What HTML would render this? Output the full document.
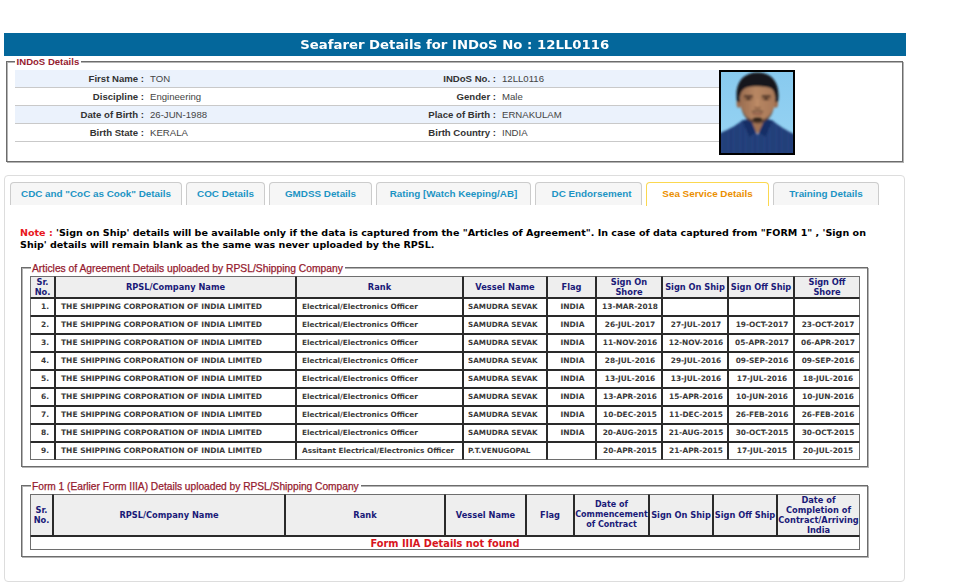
<!DOCTYPE html>
<html lang="en">
<head>
<meta charset="utf-8">
<title>Seafarer Details</title>
<style>
html,body{margin:0;padding:0;background:#fff;}
body{width:974px;height:586px;position:relative;overflow:hidden;font-family:"Liberation Sans",Arial,sans-serif;color:#333;}
.vb{font-family:"DejaVu Sans",Verdana,sans-serif;font-weight:bold;}
#title{position:absolute;left:4px;top:33px;width:902px;height:23px;background:#04679b;color:#fff;text-align:center;font-size:12.5px;line-height:24px;white-space:nowrap;}
#title span{display:inline-block;transform:scaleX(1.06);}
fieldset{position:absolute;margin:0;padding:0;border:1px solid #6c6c6c;box-shadow:1px 1px 0 #b4b4b4,inset 1px 1px 0 #b4b4b4;box-sizing:border-box;min-width:0;}
legend{padding:0 2px 0 1px;margin-left:8px;color:#961b2f;font-size:10.3px;line-height:12px;white-space:nowrap;background:#fff;position:relative;top:2px;}
#fs1{left:6px;top:55px;width:897px;height:107px;}
#fs1 legend{font-weight:bold;font-size:9.55px;top:1px;padding:0 2px 0 1.6px;}
#fs3 legend{font-size:10.2px;}
#fs2 legend,#fs3 legend{margin-left:9px;-webkit-text-stroke:0.25px #961b2f;}
.row{position:absolute;left:7px;width:704px;height:17px;border-bottom:1px solid #c9c9c9;font-size:9.6px;line-height:17px;white-space:nowrap;}
.row.alt{background:#ebf2fc;}
.row b{position:absolute;top:0;text-align:right;color:#333;}
.row span{position:absolute;top:0;color:#444;}
.l1{left:0;width:129px;} .v1{left:135px;}
.l2{left:300px;width:181px;} .v2{left:487px;}
#photo{position:absolute;left:719px;top:70px;width:76px;height:85px;background:#000;}
#photo svg{position:absolute;left:2px;top:2px;}

#tabs{position:absolute;left:4px;top:175px;width:899px;height:405px;border:1px solid #dddddd;border-radius:4px;background:#fff;}
.tab{position:absolute;top:182px;height:23px;box-sizing:border-box;border:1px solid #cccccc;border-bottom:0;border-radius:4px 4px 0 0;background:#f6f6f6;color:#1c94c4;font-weight:bold;font-size:9.85px;line-height:21px;text-align:center;white-space:nowrap;}
.tab.on{background:#fff;border-color:#fbd850;color:#eb8f00;height:24px;}
#note{position:absolute;left:20px;top:227px;font-size:9.55px;line-height:11.6px;white-space:nowrap;color:#000;}
#note i{font-style:normal;color:#e8161c;}
#fs2{left:21px;top:261px;width:847px;height:206px;}
#fs3{left:21px;top:479px;width:847px;height:78px;}
table{position:absolute;border-collapse:separate;border-spacing:0;table-layout:fixed;width:830px;left:30px;}
td,th{box-sizing:border-box;border:1px solid #2a2a2a;padding:0;overflow:hidden;white-space:nowrap;font-family:"DejaVu Sans",Verdana,sans-serif;font-weight:bold;}
th{background:#eeeeee;color:#1a1a78;font-size:8.25px;line-height:10px;text-align:center;white-space:normal;}
td{font-size:7.5px;color:#3a3a3a;height:18px;line-height:14px;text-align:center;}
tr:first-child>th{border-top-color:#6e6e6e;}tr:last-child>td{border-bottom-color:#6e6e6e;}tr>:first-child{border-left-color:#6e6e6e;}tr>:last-child{border-right-color:#6e6e6e;}
#t1{top:276px;}
#t1 th{height:22px;}
#t1 td.c1{text-align:right;padding-right:5px;}
#t1 td.c2,#t1 td.c3{text-align:left;padding-left:5px;}#t1 td.c4{text-align:left;padding-left:4px;}
#t1 td.c5,#t1 td.c6,#t1 td.c7,#t1 td.c8,#t1 td.c9{padding-left:2px;}#t1 td.c3{font-size:7.3px;}#t1 td.c4{font-size:7.2px;}#t1 td.c6,#t1 td.c7,#t1 td.c8,#t1 td.c9{font-size:7.4px;}
#t2{top:494px;}
#t2 th{height:42px;}#t2 th:nth-child(6){font-size:8px;}
#t2 td{height:14px;line-height:11px;font-size:9.8px;color:#d8141c;}
</style>
</head>
<body>
<div id="title" class="vb"><span>Seafarer Details for INDoS No : 12LL0116</span></div>

<fieldset id="fs1">
<legend>INDoS Details</legend>
</fieldset>
<div id="rows" style="position:absolute;left:8px;top:70px;">
 <div class="row alt" style="top:0"><b class="l1">First Name :</b><span class="v1">TON</span><b class="l2">INDoS No. :</b><span class="v2">12LL0116</span></div>
 <div class="row" style="top:18px"><b class="l1">Discipline :</b><span class="v1">Engineering</span><b class="l2">Gender :</b><span class="v2">Male</span></div>
 <div class="row alt" style="top:36px"><b class="l1">Date of Birth :</b><span class="v1">26-JUN-1988</span><b class="l2">Place of Birth :</b><span class="v2">ERNAKULAM</span></div>
 <div class="row" style="top:54px"><b class="l1">Birth State :</b><span class="v1">KERALA</span><b class="l2">Birth Country :</b><span class="v2">INDIA</span></div>
</div>
<div id="photo">
<svg width="72" height="81" viewBox="0 0 72 81">
 <defs>
  <filter id="bl" x="-10%" y="-10%" width="120%" height="120%"><feGaussianBlur stdDeviation="0.9"/></filter>
  <linearGradient id="bg" x1="0" y1="0" x2="0" y2="1"><stop offset="0" stop-color="#88caef"/><stop offset="1" stop-color="#98d4f3"/></linearGradient>
  <linearGradient id="fc" x1="0" y1="0" x2="1" y2="0"><stop offset="0" stop-color="#9a6d50"/><stop offset="0.45" stop-color="#b88763"/><stop offset="1" stop-color="#a87858"/></linearGradient>
  <pattern id="st" width="2.4" height="4" patternUnits="userSpaceOnUse"><rect width="2.4" height="4" fill="#1d3872"/><rect x="0" width="0.7" height="4" fill="#31528f"/></pattern>
  <clipPath id="cp"><rect width="72" height="81"/></clipPath>
 </defs>
 <rect width="72" height="81" fill="url(#bg)"/>
 <g clip-path="url(#cp)" filter="url(#bl)">
  <!-- shirt -->
  <path d="M-3 62 C6 58 15 54 21 48.5 L30 52 L36.5 63 L43 52 L51.5 48.5 C58 54 66 59 75 63 L75 84 L-3 84 Z" fill="url(#st)"/>
  <!-- neck -->
  <path d="M28 42 L45 42 L45 51 L36.5 62 L29 51 Z" fill="#a27253"/>
  <!-- collar -->
  <path d="M21 48.5 L29.5 46.5 L35 60 L28.5 65 Z" fill="#182f66"/>
  <path d="M51.5 48.5 L44 46.5 L38 60 L44.5 65 Z" fill="#182f66"/>
  <!-- ears -->
  <ellipse cx="17.8" cy="31.5" rx="2.2" ry="4.2" fill="#9c6a4b"/>
  <ellipse cx="54.8" cy="31.5" rx="2.2" ry="4.2" fill="#9c6a4b"/>
  <!-- face -->
  <path d="M19 22 C19 10 54 10 54 22 L54 32 C52.5 42 44.5 50 36.5 50 C28.5 50 20.5 42 19 32 Z" fill="url(#fc)"/>
  <!-- jaw shadow / stubble -->
  <path d="M20.5 36 C24 45.5 30.5 48.5 36.5 48.5 C42.5 48.5 49 45.5 52.5 36 C51 46.5 43.5 51.5 36.5 51.5 C29.5 51.5 22 46.5 20.5 36 Z" fill="#5b4132" opacity="0.85"/>
  <ellipse cx="36.5" cy="47.6" rx="5" ry="2.7" fill="#35271f"/>
  <!-- hair -->
  <path d="M16 30 C13 10 23 0.5 36.5 0.5 C50 0.5 60 10 57 30 L54.2 30 C54.6 22 53 17.5 49 15.8 C43 14 31 13.6 25.5 15.6 C20.5 17.4 18.4 22 18.8 30 Z" fill="#14141d"/>
  <!-- eye sockets, brows & eyes -->
  <ellipse cx="27.3" cy="26" rx="5" ry="2.8" fill="#8a5f45" opacity="0.7"/>
  <ellipse cx="45.2" cy="26" rx="5" ry="2.8" fill="#8a5f45" opacity="0.7"/>
  <rect x="22.8" y="23.3" width="9.2" height="1.5" rx="0.75" fill="#2f201a"/>
  <rect x="40.6" y="23.3" width="9.2" height="1.5" rx="0.75" fill="#2f201a"/>
  <ellipse cx="27.4" cy="26.9" rx="2.3" ry="1.1" fill="#33221c"/>
  <ellipse cx="45.1" cy="26.9" rx="2.3" ry="1.1" fill="#33221c"/>
  <!-- nose & mouth -->
  <path d="M36.5 27 L36.5 34" stroke="#c7966f" stroke-width="1.6" fill="none" opacity="0.7"/>
  <path d="M33.6 35.4 Q36.5 37.4 39.4 35.4" stroke="#7d523a" stroke-width="1.3" fill="none"/>
  <path d="M31.8 41.6 Q36.5 43 41.2 41.6" stroke="#7a413a" stroke-width="1.5" fill="none"/>
  <!-- moustache -->
  <path d="M30.8 39.8 Q36.5 37.9 42.2 39.8" stroke="#4a3328" stroke-width="1.1" fill="none" opacity="0.9"/>
 </g>
</svg>
</div>

<div id="tabs"></div>
<div class="tab" style="left:10px;width:172px">CDC and "CoC as Cook" Details</div>
<div class="tab" style="left:186px;width:79px">COC Details</div>
<div class="tab" style="left:269px;width:103px">GMDSS Details</div>
<div class="tab" style="left:376px;width:155px">Rating [Watch Keeping/AB]</div>
<div class="tab" style="left:535px;width:107px;padding-left:6px">DC Endorsement</div>
<div class="tab on" style="left:646px;width:123px">Sea Service Details</div>
<div class="tab" style="left:773px;width:106px">Training Details</div>
<div id="note" class="vb"><i>Note :</i> 'Sign on Ship' details will be available only if the data is captured from the "Articles of Agreement". In case of data captured from "FORM 1" , 'Sign on<br>Ship' details will remain blank as the same was never uploaded by the RPSL.</div>

<fieldset id="fs2"><legend>Articles of Agreement Details uploaded by RPSL/Shipping Company</legend></fieldset>
<table id="t1">
 <colgroup><col style="width:25px"><col style="width:241px"><col style="width:167px"><col style="width:84px"><col style="width:49px"><col style="width:66px"><col style="width:66px"><col style="width:66px"><col style="width:66px"></colgroup>
 <tr><th>Sr.<br>No.</th><th>RPSL/Company Name</th><th>Rank</th><th>Vessel Name</th><th>Flag</th><th>Sign On<br>Shore</th><th>Sign On Ship</th><th>Sign Off Ship</th><th>Sign Off<br>Shore</th></tr>
 <tr><td class="c1">1.</td><td class="c2">THE SHIPPING CORPORATION OF INDIA LIMITED</td><td class="c3">Electrical/Electronics Officer</td><td class="c4">SAMUDRA SEVAK</td><td class="c5">INDIA</td><td class="c6">13-MAR-2018</td><td class="c7">&nbsp;</td><td class="c8">&nbsp;</td><td class="c9">&nbsp;</td></tr>
 <tr><td class="c1">2.</td><td class="c2">THE SHIPPING CORPORATION OF INDIA LIMITED</td><td class="c3">Electrical/Electronics Officer</td><td class="c4">SAMUDRA SEVAK</td><td class="c5">INDIA</td><td class="c6">26-JUL-2017</td><td class="c7">27-JUL-2017</td><td class="c8">19-OCT-2017</td><td class="c9">23-OCT-2017</td></tr>
 <tr><td class="c1">3.</td><td class="c2">THE SHIPPING CORPORATION OF INDIA LIMITED</td><td class="c3">Electrical/Electronics Officer</td><td class="c4">SAMUDRA SEVAK</td><td class="c5">INDIA</td><td class="c6">11-NOV-2016</td><td class="c7">12-NOV-2016</td><td class="c8">05-APR-2017</td><td class="c9">06-APR-2017</td></tr>
 <tr><td class="c1">4.</td><td class="c2">THE SHIPPING CORPORATION OF INDIA LIMITED</td><td class="c3">Electrical/Electronics Officer</td><td class="c4">SAMUDRA SEVAK</td><td class="c5">INDIA</td><td class="c6">28-JUL-2016</td><td class="c7">29-JUL-2016</td><td class="c8">09-SEP-2016</td><td class="c9">09-SEP-2016</td></tr>
 <tr><td class="c1">5.</td><td class="c2">THE SHIPPING CORPORATION OF INDIA LIMITED</td><td class="c3">Electrical/Electronics Officer</td><td class="c4">SAMUDRA SEVAK</td><td class="c5">INDIA</td><td class="c6">13-JUL-2016</td><td class="c7">13-JUL-2016</td><td class="c8">17-JUL-2016</td><td class="c9">18-JUL-2016</td></tr>
 <tr><td class="c1">6.</td><td class="c2">THE SHIPPING CORPORATION OF INDIA LIMITED</td><td class="c3">Electrical/Electronics Officer</td><td class="c4">SAMUDRA SEVAK</td><td class="c5">INDIA</td><td class="c6">13-APR-2016</td><td class="c7">15-APR-2016</td><td class="c8">10-JUN-2016</td><td class="c9">10-JUN-2016</td></tr>
 <tr><td class="c1">7.</td><td class="c2">THE SHIPPING CORPORATION OF INDIA LIMITED</td><td class="c3">Electrical/Electronics Officer</td><td class="c4">SAMUDRA SEVAK</td><td class="c5">INDIA</td><td class="c6">10-DEC-2015</td><td class="c7">11-DEC-2015</td><td class="c8">26-FEB-2016</td><td class="c9">26-FEB-2016</td></tr>
 <tr><td class="c1">8.</td><td class="c2">THE SHIPPING CORPORATION OF INDIA LIMITED</td><td class="c3">Electrical/Electronics Officer</td><td class="c4">SAMUDRA SEVAK</td><td class="c5">INDIA</td><td class="c6">20-AUG-2015</td><td class="c7">21-AUG-2015</td><td class="c8">30-OCT-2015</td><td class="c9">30-OCT-2015</td></tr>
 <tr><td class="c1">9.</td><td class="c2">THE SHIPPING CORPORATION OF INDIA LIMITED</td><td class="c3">Assitant Electrical/Electronics Officer</td><td class="c4">P.T.VENUGOPAL</td><td class="c5">&nbsp;</td><td class="c6">20-APR-2015</td><td class="c7">21-APR-2015</td><td class="c8">17-JUL-2015</td><td class="c9">20-JUL-2015</td></tr>
</table>

<fieldset id="fs3"><legend>Form 1 (Earlier Form IIIA) Details uploaded by RPSL/Shipping Company</legend></fieldset>
<table id="t2">
 <colgroup><col style="width:23px"><col style="width:232px"><col style="width:160px"><col style="width:81px"><col style="width:48px"><col style="width:75px"><col style="width:64px"><col style="width:64px"><col style="width:83px"></colgroup>
 <tr><th>Sr.<br>No.</th><th>RPSL/Company Name</th><th>Rank</th><th>Vessel Name</th><th>Flag</th><th>Date of<br>Commencement<br>of Contract</th><th>Sign On Ship</th><th>Sign Off Ship</th><th>Date of<br>Completion of<br>Contract/Arriving<br>India</th></tr>
 <tr><td colspan="9">Form IIIA Details not found</td></tr>
</table>

</body>
</html>
